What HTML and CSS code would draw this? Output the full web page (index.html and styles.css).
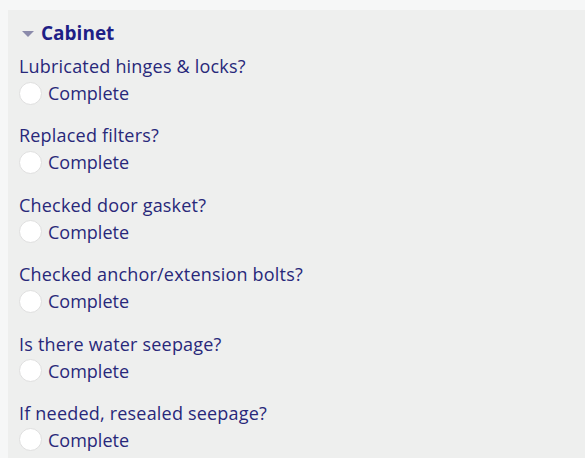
FILE: index.html
```html
<!DOCTYPE html>
<html>
<head>
<meta charset="utf-8">
<link rel="stylesheet" href="styles.css">
</head>
<body>
<section class="panel">
  <div class="title-row">
    <span class="caret"></span>
    <h2 class="title">Cabinet</h2>
  </div>
  <div class="item">
    <div class="label">Lubricated hinges &amp; locks?</div>
    <label class="check"><span class="circle"></span><span class="check-text">Complete</span></label>
  </div>
  <div class="item">
    <div class="label">Replaced filters?</div>
    <label class="check"><span class="circle"></span><span class="check-text">Complete</span></label>
  </div>
  <div class="item">
    <div class="label">Checked door gasket?</div>
    <label class="check"><span class="circle"></span><span class="check-text">Complete</span></label>
  </div>
  <div class="item">
    <div class="label">Checked anchor/extension bolts?</div>
    <label class="check"><span class="circle"></span><span class="check-text">Complete</span></label>
  </div>
  <div class="item">
    <div class="label">Is there water seepage?</div>
    <label class="check"><span class="circle"></span><span class="check-text">Complete</span></label>
  </div>
  <div class="item">
    <div class="label">If needed, resealed seepage?</div>
    <label class="check"><span class="circle"></span><span class="check-text">Complete</span></label>
  </div>
</section>
</body>
</html>
```
FILE: styles.css
```css
html, body {
  margin: 0;
  padding: 0;
  background: #f6f7f7;
  height: 100%;
  overflow: hidden;
}
body {
  padding: 10px 0 0 8px;
  box-sizing: border-box;
  font-family: "Open Sans", "Noto Sans", sans-serif;
  color: #28287a;
}
.panel {
  background: #eeefee;
  padding: 11px 0 0 11px;
  height: 100%;
  box-sizing: border-box;
  overflow: hidden;
}
.title-row {
  display: flex;
  align-items: center;
  height: 24px;
  margin-bottom: 9px;
}
.caret {
  width: 0;
  height: 0;
  border-left: 6px solid transparent;
  border-right: 6px solid transparent;
  border-top: 6px solid #8b8bab;
  margin: 2px 7px 0 3px;
}
.title {
  margin: 0;
  font-size: 19px;
  font-weight: 700;
  line-height: 24px;
  color: #1f1f86;
}
.item {
  margin-bottom: 15.4px;
}
.label {
  font-size: 18px;
  line-height: 24px;
  letter-spacing: 0.2px;
}
.check {
  display: flex;
  align-items: center;
  height: 30px;
}
.circle {
  width: 21px;
  height: 21px;
  border-radius: 50%;
  background: #fff;
  border: 1px solid #dfdfdf;
  margin-right: 6px;
}
.check-text {
  font-size: 18px;
  line-height: 24px;
}
```
